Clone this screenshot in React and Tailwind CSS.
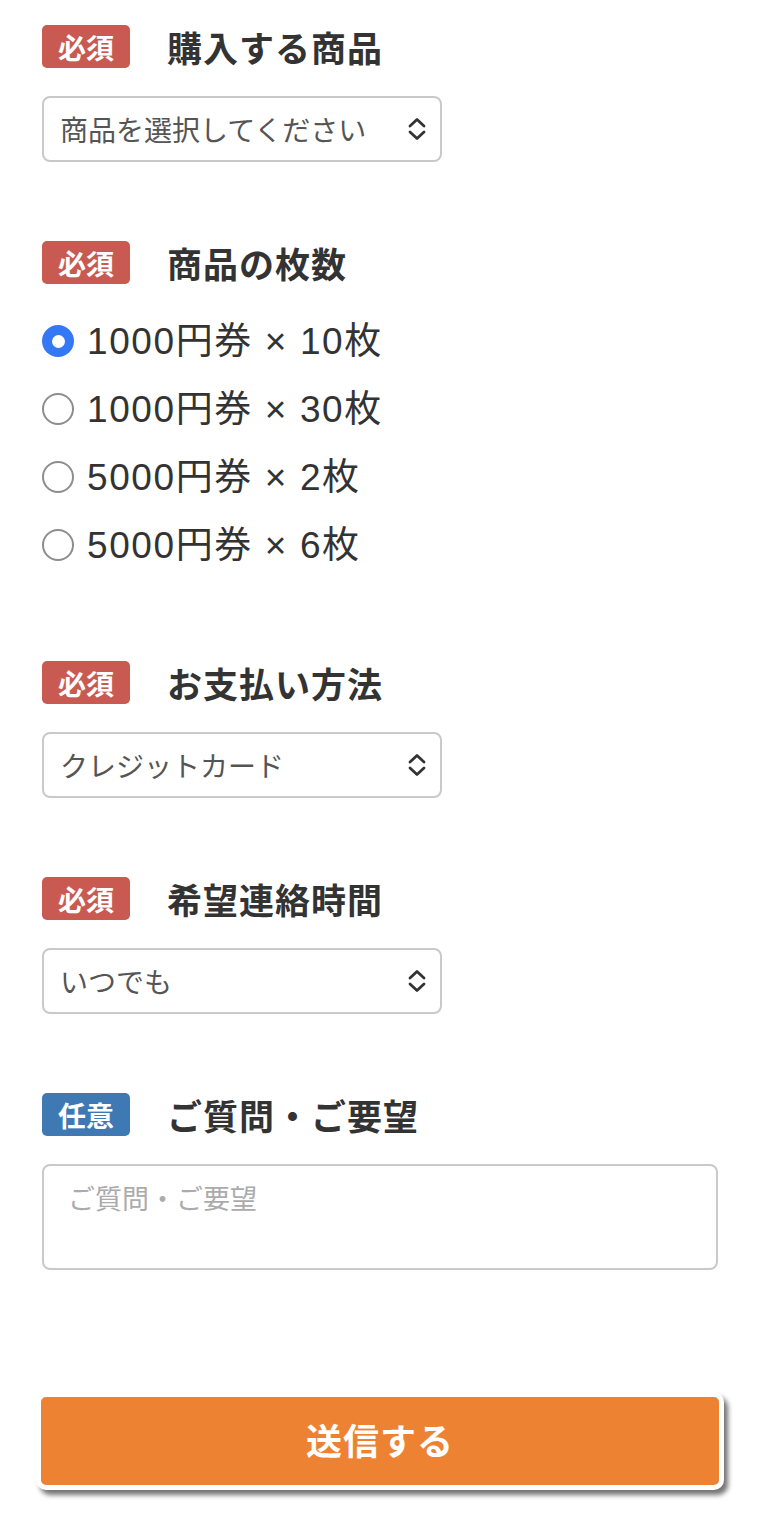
import React from "react";

const font = { fontFamily: '"Noto Sans CJK JP", "Noto Sans", sans-serif' };
const latinFont = { fontFamily: '"Liberation Sans", "Noto Sans CJK JP", sans-serif' };

function Badge({ optional }) {
  return (
    <span
      className={`flex h-[43px] w-[88px] shrink-0 items-center justify-center rounded-[5px] text-[28px] font-bold leading-none text-white ${
        optional ? "bg-[#3f79b4]" : "bg-[#c95a52]"
      }`}
    >
      {optional ? "任意" : "必須"}
    </span>
  );
}

function Header({ optional, title }) {
  return (
    <div className="flex h-[43px] items-center">
      <Badge optional={optional} />
      <h2 className="ml-[37px] text-[35px] font-bold leading-none tracking-[1px] text-[#333]">{title}</h2>
    </div>
  );
}

function Chevron() {
  return (
    <svg width="22" height="26" viewBox="0 0 22 26" fill="none" className="shrink-0">
      <path d="M4 10 L11 3.5 L18 10" stroke="#333" strokeWidth="2.8" strokeLinecap="round" strokeLinejoin="round" />
      <path d="M4 16 L11 22.5 L18 16" stroke="#333" strokeWidth="2.8" strokeLinecap="round" strokeLinejoin="round" />
    </svg>
  );
}

function Select({ value }) {
  return (
    <div className="mt-[28px] flex h-[66px] w-[400px] items-center justify-between rounded-[8px] border-2 border-[#c9c9c9] bg-white pl-[16px] pr-[12px]">
      <span className="text-[28px] leading-none text-[#555]">{value}</span>
      <Chevron />
    </div>
  );
}

function Radio({ checked, label }) {
  return (
    <div className="flex h-[68px] items-center">
      {checked ? (
        <span className="flex h-[32px] w-[32px] shrink-0 items-center justify-center rounded-full bg-[#3478f6]">
          <span className="h-[13px] w-[13px] rounded-full bg-white" />
        </span>
      ) : (
        <span className="h-[32px] w-[32px] shrink-0 rounded-full border-[2.5px] border-[#8d8d8d] bg-white" />
      )}
      <span style={latinFont} className="ml-[13px] text-[37px] leading-none tracking-[1.6px] text-[#333]">
        {label}
      </span>
    </div>
  );
}

export default function App() {
  return (
    <div style={font} className="min-h-[1520px] bg-white pl-[42px] pr-[49px] pt-[25px]">
      <section>
        <Header title="購入する商品" />
        <Select value="商品を選択してください" />
      </section>

      <section className="mt-[79px]">
        <Header title="商品の枚数" />
        <div className="mt-[23px] flex flex-col">
          <Radio checked label="1000円券 × 10枚" />
          <Radio label="1000円券 × 30枚" />
          <Radio label="5000円券 × 2枚" />
          <Radio label="5000円券 × 6枚" />
        </div>
      </section>

      <section className="mt-[82px]">
        <Header title="お支払い方法" />
        <Select value="クレジットカード" />
      </section>

      <section className="mt-[79px]">
        <Header title="希望連絡時間" />
        <Select value="いつでも" />
      </section>

      <section className="mt-[79px]">
        <Header optional title="ご質問・ご要望" />
        <div className="mt-[28px] h-[106px] w-full rounded-[8px] border-2 border-[#c9c9c9] bg-white px-[24px] pt-[18px]">
          <span className="text-[27px] leading-none text-[#ababab]">ご質問・ご要望</span>
        </div>
      </section>

      <div className="mt-[122px] -ml-[6px] -mr-[6px]">
        <button className="flex h-[98px] w-full items-center justify-center rounded-[10px] border-[5px] border-white bg-[#ee8233] pb-[4px] text-[36px] font-bold tracking-[1px] text-white shadow-[4px_5px_5px_rgba(0,0,0,0.55)]">
          送信する
        </button>
      </div>
    </div>
  );
}
